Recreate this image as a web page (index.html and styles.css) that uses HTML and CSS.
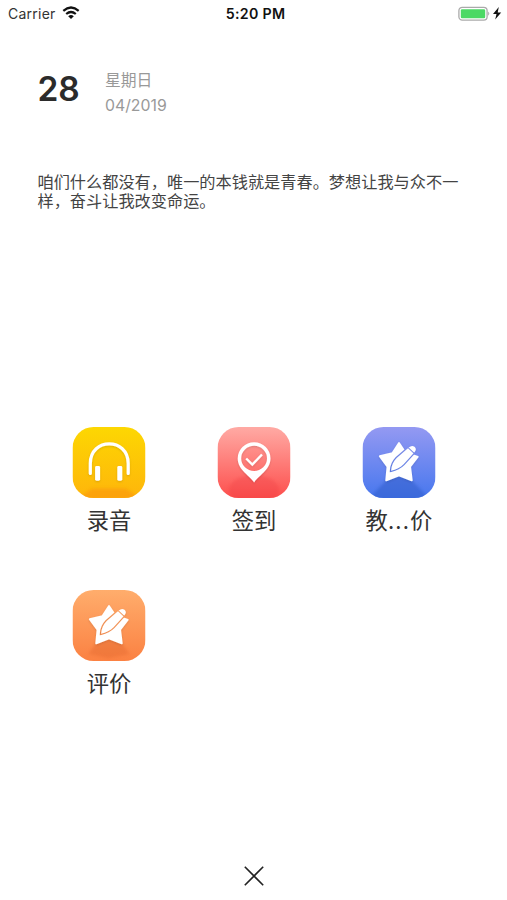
FILE: index.html
```html
<!DOCTYPE html>
<html lang="zh-CN">
<head>
<meta charset="utf-8">
<title>Quick actions</title>
<link rel="stylesheet" href="styles.css">
</head>
<body>
<svg class="defs" width="0" height="0" aria-hidden="true">
  <defs>
    <linearGradient id="yellow" x1="0" y1="0" x2="0" y2="1"><stop offset="0" stop-color="#fdd702"/><stop offset="1" stop-color="#feb50b"/></linearGradient>
    <linearGradient id="red" x1="0" y1="0" x2="0" y2="1"><stop offset="0" stop-color="#ffaaa4"/><stop offset="1" stop-color="#fd4f4d"/></linearGradient>
    <linearGradient id="blue" x1="0" y1="0" x2="0" y2="1"><stop offset="0" stop-color="#9499f2"/><stop offset="1" stop-color="#4777ee"/></linearGradient>
    <linearGradient id="orange" x1="0" y1="0" x2="0" y2="1"><stop offset="0" stop-color="#ffad6c"/><stop offset="1" stop-color="#fb8142"/></linearGradient>
    <clipPath id="tile"><rect width="73" height="71" rx="21"/></clipPath>
    <filter id="soft" x="-20%" y="-30%" width="140%" height="160%"><feGaussianBlur stdDeviation="1.8"/></filter>
    <filter id="drop" x="-20%" y="-20%" width="140%" height="150%"><feDropShadow dx="0" dy="1" stdDeviation=".9" flood-color="#000" flood-opacity=".14"/></filter>
    <path id="pencil" d="M28.6 43.7C28.8 38.4 31.2 34 34.2 30.9L46.3 20.5Q49.3 17.8 52 19.8 54.6 22.2 52.2 25L41.1 37.2C38 40.3 33.7 42.6 28.6 43.7Z"/>
    <mask id="cut" maskUnits="userSpaceOnUse" x="0" y="0" width="73" height="71"><rect width="73" height="71" fill="#fff"/><use href="#pencil" fill="#000" stroke="#000" stroke-width="2.6"/></mask>
    <mask id="band" maskUnits="userSpaceOnUse" x="0" y="0" width="73" height="71"><rect width="73" height="71" fill="#fff"/><path d="m45.6 20.6 6.4 6" stroke="#000" stroke-width="1.1"/></mask>
    <g id="star">
      <path mask="url(#cut)" d="M36.5 16 43 25.7 55.3 29.8 47.6 39.6 49.3 53.3 36.5 48.3 23.7 53.3 25 39.6 17.3 29.2 30 26Z" fill="#fff" stroke="#fff" stroke-width="1.8" stroke-linejoin="round"/>
      <use href="#pencil" fill="#fff" mask="url(#band)"/>
    </g>
  </defs>
</svg>
<header class="status">
  <div class="carrier"><span>Carrier</span>
    <svg width="18" height="14" viewBox="0 0 18 14" fill="none" stroke="#111" stroke-width="2.2"><path d="M1.3 4.8Q9-1.8 16.7 4.8M4.2 8Q9 4 13.8 8"/><path d="M9 13 6.2 10.2Q9 7.9 11.8 10.2Z" fill="#111" stroke="none"/></svg>
  </div>
  <div class="time">5:20 PM</div>
  <div class="battery">
    <svg width="44" height="16" viewBox="0 0 44 16"><rect x=".9" y="1.3" width="28.2" height="12.8" rx="3.4" fill="#fff" stroke="#aaa" stroke-width="1.3"/><rect x="2.8" y="3.2" width="24.4" height="9" rx="1.3" fill="#4bd964"/><path d="M30.3 5.6Q32.2 7.7 30.3 9.8Z" fill="#999"/><path d="M40.8 1 35 7.9H38.5L37.2 13.6 43.2 6.4H39.7Z" fill="#111"/></svg>
  </div>
</header>
<main>
  <section class="date">
    <div class="day">28</div>
    <div class="meta"><div class="weekday">星期日</div><div class="month">04/2019</div></div>
  </section>
  <p class="quote">咱们什么都没有，唯一的本钱就是青春。梦想让我与众不一样，奋斗让我改变命运。</p>
  <nav class="grid">
    <div class="item">
      <svg class="icon" viewBox="-.5 0 74 71"><g clip-path="url(#tile)"><rect width="73" height="71" fill="url(#yellow)"/><path d="M4 72 20 61.5H53L69 72Z" fill="#fb980e" opacity=".65" filter="url(#soft)"/></g>
        <g filter="url(#drop)"><path d="M17.8 46.5V36.5C17.8 10.3 55.7 10.3 55.7 36.5V46.5" fill="none" stroke="#fff" stroke-width="3.2" stroke-linecap="round"/><rect x="22.6" y="39" width="5" height="14.7" rx="1.4" fill="#fff"/><rect x="44.8" y="39" width="5" height="14.7" rx="1.4" fill="#fff"/></g></svg>
      <span class="label">录音</span>
    </div>
    <div class="item">
      <svg class="icon" viewBox="-.5 0 74 71"><g clip-path="url(#tile)"><rect width="73" height="71" fill="url(#red)"/><ellipse cx="36.5" cy="63" rx="25" ry="15" fill="#ef3d42" opacity=".3" filter="url(#soft)"/></g>
        <g filter="url(#drop)"><path fill="#fff" fill-rule="evenodd" d="M36.6 55.5C33 49.2 20.2 43 20.2 31.5A16.4 16.2 0 0 1 53 31.5C53 43 40.2 49.2 36.6 55.5ZM36.6 18.8A12.9 12.6 0 1 0 36.6 44 12.9 12.6 0 0 0 36.6 18.8Z"/><path d="m28.7 31.5 6.1 6 9.7-10" fill="none" stroke="#fff" stroke-width="2.4"/></g></svg>
      <span class="label">签到</span>
    </div>
    <div class="item">
      <svg class="icon" viewBox="-.5 0 74 71"><g clip-path="url(#tile)"><rect width="73" height="71" fill="url(#blue)"/><path d="M5 73 24 53 36.5 49 49 53 68 73Z" fill="#2e5bc8" opacity=".5" filter="url(#soft)"/></g><use href="#star" filter="url(#drop)"/></svg>
      <span class="label">教<span class="dots">...</span>价</span>
    </div>
    <div class="item">
      <svg class="icon" viewBox="-.5 0 74 71"><g clip-path="url(#tile)"><rect width="73" height="71" fill="url(#orange)"/><path d="M16 64 24 53 36.5 49 49 53 57 64 36 68Z" fill="#e2662e" opacity=".4" filter="url(#soft)"/></g><use href="#star" filter="url(#drop)"/></svg>
      <span class="label">评价</span>
    </div>
  </nav>
</main>
<footer class="close"><svg width="20" height="20" viewBox="0 0 20 20"><path d="M.8.8 19.2 19.2M19.2.8.8 19.2" stroke="#222" stroke-width="1.6"/></svg></footer>
</body>
</html>
```
FILE: styles.css
```css
* { box-sizing: border-box; }
body {
  margin: 0;
  height: 900px;
  display: flex;
  flex-direction: column;
  background: #fff;
  color: #333;
  font-family: Inter, "Noto Sans CJK SC", sans-serif;
  overflow: hidden;
}
.defs { display: block; flex: none; }
svg { display: block; }
.status {
  height: 28px;
  flex: none;
  display: grid;
  grid-template-columns: 1fr auto 1fr;
  align-items: center;
  padding: 0 5px 0 8px;
  color: #111;
  font-size: 14px;
  line-height: 28px;
}
.carrier { display: flex; align-items: center; gap: 6px; color: #333; letter-spacing: .25px; }
.carrier svg { margin-top: -2px; }
.time { font-weight: 600; font-size: 14.2px; letter-spacing: .3px; margin-left: 1px; }
.battery { display: flex; justify-content: flex-end; }
.battery svg { margin-top: -1px; }
main { flex: 1; }
.date {
  display: flex;
  height: 58px;
  margin: 38px 0 0 37.5px;
}
.day {
  width: 67.5px;
  font-size: 33.5px;
  line-height: 46px;
  font-weight: 600;
  color: #2b2b2b;
}
.meta { padding-top: 1px; color: #999; font-size: 16px; line-height: 26px; }
.weekday { font-family: "Noto Sans CJK SC", sans-serif; font-size: 15.8px; }
.month { font-size: 15.8px; }
.quote {
  margin: 48px 37.5px 0;
  width: 424px;
  height: 38px;
  font-family: "Noto Sans CJK SC", sans-serif;
  font-size: 16.2px;
  line-height: 19px;
  color: #444;
}
.grid {
  margin: 217px 0 0 36.5px;
  display: grid;
  grid-template-columns: repeat(3, 145px);
  grid-auto-rows: 163px;
}
.item { width: 145px; display: flex; flex-direction: column; align-items: center; }
.icon { width: 74px; height: 71px; }
.label {
  margin-top: 5px;
  font-family: "Noto Sans CJK SC", sans-serif;
  font-size: 22.3px;
  line-height: 32px;
}
.dots { letter-spacing: 1.2px; }
.close { flex: none; height: 34px; display: flex; justify-content: center; }
```
